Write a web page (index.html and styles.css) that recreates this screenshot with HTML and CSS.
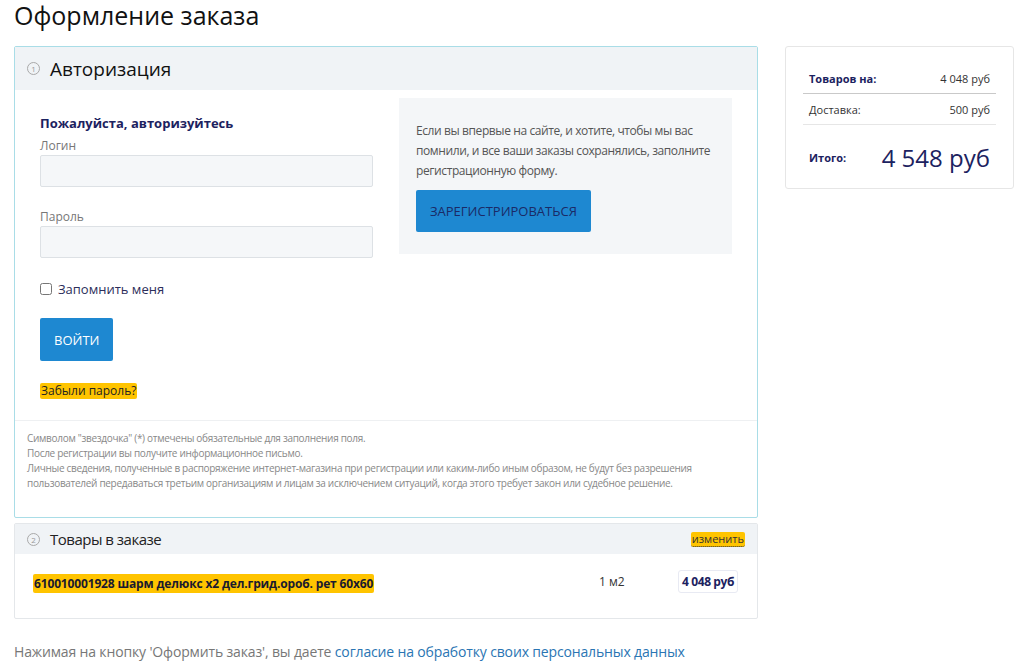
FILE: index.html
```html
<!DOCTYPE html>
<html lang="ru">
<head>
    <meta charset="UTF-8">
    <meta name="viewport" content="width=device-width, initial-scale=1.0">
    <title>Оформление заказа</title>
    <link rel="stylesheet" href="styles.css">
</head>
<body>
    <h1 class="page-title">Оформление заказа</h1>

    <div class="order-layout">
        <div class="order-main">

            <div class="step step-active">
                <div class="step-head">
                    <span class="step-num">1</span>
                    <span class="step-title">Авторизация</span>
                </div>
                <div class="auth-body">
                    <div class="auth-login">
                        <h4>Пожалуйста, авторизуйтесь</h4>
                        <label class="field-label">Логин</label>
                        <input type="text" class="field-input">
                        <label class="field-label field-gap">Пароль</label>
                        <input type="password" class="field-input">
                        <label class="remember"><input type="checkbox"> Запомнить меня</label>
                        <button class="btn btn-login">ВОЙТИ</button>
                        <div><a href="#" class="forgot">Забыли пароль?</a></div>
                    </div>
                    <div class="auth-register">
                        <p>Если вы впервые на сайте, и хотите, чтобы мы вас помнили, и все ваши заказы сохранялись, заполните регистрационную форму.</p>
                        <button class="btn btn-register">ЗАРЕГИСТРИРОВАТЬСЯ</button>
                    </div>
                </div>
                <div class="auth-notes">
                    Символом "звездочка" (*) отмечены обязательные для заполнения поля.<br>
                    После регистрации вы получите информационное письмо.<br>
                    Личные сведения, полученные в распоряжение интернет-магазина при регистрации или каким-либо иным образом, не будут без разрешения<br>
                    пользователей передаваться третьим организациям и лицам за исключением ситуаций, когда этого требует закон или судебное решение.
                </div>
            </div>

            <div class="step">
                <div class="step-head step-head-small">
                    <span class="step-num">2</span>
                    <span class="step-title-small">Товары в заказе</span>
                    <a href="#" class="edit-link">изменить</a>
                </div>
                <div class="basket-row">
                    <div class="basket-name"><span>610010001928 шарм делюкс x2 дел.грид.ороб. рет 60х60</span></div>
                    <div class="basket-qty">1 м2</div>
                    <div class="basket-price">4 048 руб</div>
                </div>
            </div>

            <p class="consent">Нажимая на кнопку 'Оформить заказ', вы даете <a href="#">согласие на обработку своих персональных данных</a></p>
        </div>

        <div class="order-total">
            <div class="total-row total-first">
                <span class="total-label bold">Товаров на:</span>
                <span class="total-value">4 048 руб</span>
            </div>
            <div class="total-row">
                <span class="total-label">Доставка:</span>
                <span class="total-value">500 руб</span>
            </div>
            <div class="total-row total-sum">
                <span class="total-label bold">Итого:</span>
                <span class="total-big">4 548 руб</span>
            </div>
        </div>
    </div>
</body>
</html>
```

FILE: styles.css
```css
body {
    font-family: 'Open Sans', 'Liberation Sans', sans-serif;
    margin: 0;
    padding: 0 9px 0 14px;
    background: #fff;
    color: #333;
}

.page-title {
    font-size: 25px;
    font-weight: 400;
    color: #111;
    margin: 0 0 16px;
    line-height: 30px;
}

.order-layout {
    display: flex;
    gap: 27px;
    align-items: flex-start;
}

.order-main {
    width: 744px;
}

.step {
    border: 1px solid #e4e7ea;
    border-radius: 2px;
    margin-bottom: 5px;
}

.step-active {
    border-color: #a9dde7;
}

.step-head {
    background: #f0f3f6;
    height: 43px;
    display: flex;
    align-items: center;
    padding: 0 12px;
}

.step-head-small {
    height: 30px;
}

.step-num {
    width: 11px;
    height: 11px;
    border: 1px solid #a9a9a9;
    border-radius: 50%;
    font-size: 8px;
    line-height: 11px;
    text-align: center;
    color: #999;
    margin-right: 10px;
}

.step-title {
    font-size: 19px;
    color: #111;
}

.step-title-small {
    font-size: 15px;
    letter-spacing: -0.5px;
    color: #222;
    flex: 1;
}

.edit-link {
    font-size: 11px;
    color: #333;
    background: #ffc400;
    border-radius: 2px;
    text-decoration: none;
    border-bottom: 1px dotted #333;
    line-height: 14px;
    padding: 0 1px;
}

/* auth step */
.auth-body {
    display: grid;
    grid-template-columns: 333px 333px;
    gap: 26px;
    align-items: start;
    padding: 8px 25px 0;
}

.auth-login {
    padding-top: 16px;
}

.auth-login h4 {
    margin: 0;
    font-size: 13px;
    line-height: 18px;
    color: #1c2260;
}

.field-label {
    display: block;
    font-size: 12px;
    line-height: 18px;
    color: #777;
    margin-top: 5px;
}

.field-gap {
    margin-top: 21px;
}

.field-input {
    display: block;
    width: 100%;
    height: 32px;
    box-sizing: border-box;
    border: 1px solid #dde1e5;
    border-radius: 2px;
    background: #f5f7f9;
    margin: 0;
}

.remember {
    display: flex;
    align-items: center;
    margin-top: 23px;
    font-size: 13px;
    color: #2c2e5a;
    line-height: 16px;
}

.remember input {
    width: 12px;
    height: 12px;
    margin: 0 6px 0 0;
    accent-color: #999;
}

.btn {
    border: none;
    border-radius: 2px;
    background: #1e88d1;
    font-family: inherit;
    font-size: 13px;
    height: 43px;
    padding: 0 14px;
    cursor: pointer;
}

.btn-login {
    display: block;
    margin-top: 21px;
    color: #fff;
}

.btn-register {
    height: 42px;
    color: #1b2a66;
    margin-top: 9px;
}

.forgot {
    display: inline-block;
    margin-top: 22px;
    font-size: 12px;
    line-height: 16px;
    color: #222;
    background: #ffc400;
    border-radius: 2px;
    padding: 0 1px;
    text-decoration: none;
}

.auth-register {
    background: #f4f6f8;
    padding: 23px 17px 22px;
}

.auth-register p {
    margin: 0;
    font-size: 12px;
    letter-spacing: -0.4px;
    line-height: 20px;
    color: #555;
}

.auth-notes {
    margin-top: 20px;
    border-top: 1px solid #eef0f2;
    padding: 10px 12px 26px;
    font-size: 10px;
    letter-spacing: -0.3px;
    line-height: 15px;
    color: #888;
}

/* basket step */
.basket-row {
    display: flex;
    align-items: center;
    padding: 16px 19px 25px 18px;
}

.basket-name {
    flex: 1;
}

.basket-name span {
    background: #ffc400;
    border-radius: 2px;
    font-size: 12px;
    font-weight: 700;
    letter-spacing: -0.15px;
    color: #1a1a2e;
    padding: 1px 1px;
}

.basket-qty {
    width: 79px;
    font-size: 12px;
    color: #333;
}

.basket-price {
    border: 1px solid #e8eaf3;
    border-radius: 3px;
    padding: 2px 3px;
    font-size: 12px;
    font-weight: 700;
    letter-spacing: -0.4px;
    color: #1c2260;
}

.consent {
    margin: 23px 0 0;
    font-size: 14px;
    letter-spacing: -0.15px;
    color: #777;
}

.consent a {
    color: #2a75b3;
    text-decoration: none;
}

/* totals sidebar */
.order-total {
    width: 229px;
    box-sizing: border-box;
    border: 1px solid #e6e6e6;
    border-radius: 3px;
    padding: 16px 17px 14px;
}

.total-row {
    display: flex;
    justify-content: space-between;
    align-items: center;
    height: 30px;
    padding: 0 6px;
    border-bottom: 1px solid #e6e6e6;
    font-size: 11px;
}

.total-first {
    border-bottom-color: #c9c9c9;
}

.total-sum {
    border-bottom: none;
    height: 34px;
    padding-top: 15px;
}

.total-label {
    color: #333;
}

.bold {
    font-weight: 700;
    color: #1c2260;
}

.total-value {
    color: #333;
}

.total-big {
    font-size: 24px;
    color: #1c2260;
}
```
